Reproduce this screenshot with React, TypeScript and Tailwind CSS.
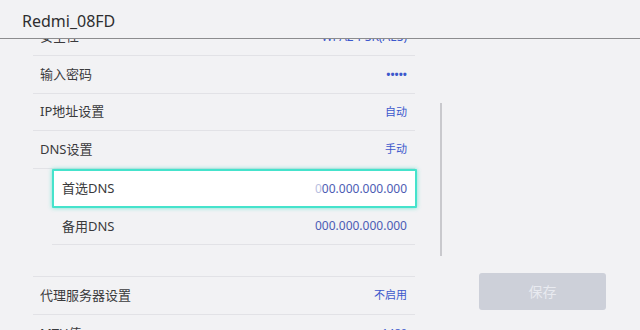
import React from "react";

const font = { fontFamily: '"Noto Sans", "Noto Sans CJK SC", sans-serif' };

function Row({ label, value, valueClass = "" }: { label: string; value: string; valueClass?: string }) {
  return (
    <div className="flex h-[37.67px] items-center justify-between border-b border-[#e2e2e6] pl-[7px] pr-[8px]">
      <span className="text-[13px] text-[#3a3a3c]">{label}</span>
      <span className={"text-[#3c58cc] " + (valueClass || "text-[11px]")}>{value}</span>
    </div>
  );
}

export default function App() {
  return (
    <div className="h-[330px] w-[640px] overflow-hidden bg-[#f2f2f4]" style={font}>
      <div className="flex h-[39px] items-center border-b border-[#8c8c8e] pl-[22px] pt-[4px]">
        <span className="text-[16px] text-[#2e2e30]">Redmi_08FD</span>
      </div>
      <div className="flex h-[291px]">
        <div className="relative w-[445px] overflow-hidden">
          <div className="ml-[33px] mt-[-20.67px] w-[382px]">
            <Row label="安全性" value="WPA2-PSK(AES)" valueClass="text-[12px]" />
            <Row label="输入密码" value="•••••" valueClass="text-[11px] font-bold" />
            <Row label="IP地址设置" value="自动" />
            <Row label="DNS设置" value="手动" />
            <div className="pl-[19px]">
              <div className="mr-[-2px] flex h-[39.33px] items-center justify-between rounded-[1px] border-2 border-[#45e3cc] bg-white pl-[8px] pr-[8px] shadow-[0_0_4px_rgba(60,225,200,0.7)]">
                <span className="text-[13px] text-[#3a3a3c]">首选DNS</span>
                <span className="text-[12px] text-[#4c5cb4]">
                  <span className="text-[#b8bedf]">0</span>00.000.000.000
                </span>
              </div>
              <div className="flex h-[37px] items-center justify-between border-b border-[#e2e2e6] pl-[10px] pr-[8px]">
                <span className="text-[13px] text-[#3a3a3c]">备用DNS</span>
                <span className="text-[12px] text-[#4c5cb4]">000.000.000.000</span>
              </div>
            </div>
            <div className="h-[32px] border-b border-[#e2e2e6]" />
            <Row label="代理服务器设置" value="不启用" />
            <Row label="MTU值" value="1480" />
          </div>
          <div className="absolute left-[440px] top-[64px] h-[153px] w-[2px] bg-[#c9c9cd]" />
        </div>
        <div className="flex flex-1 flex-col justify-end pb-[20px] pl-[34px]">
          <div className="flex h-[37px] w-[127px] items-center justify-center rounded-[3px] bg-[#cdd0d9] text-[14px] text-[#e8eaf0]">
            保存
          </div>
        </div>
      </div>
    </div>
  );
}
